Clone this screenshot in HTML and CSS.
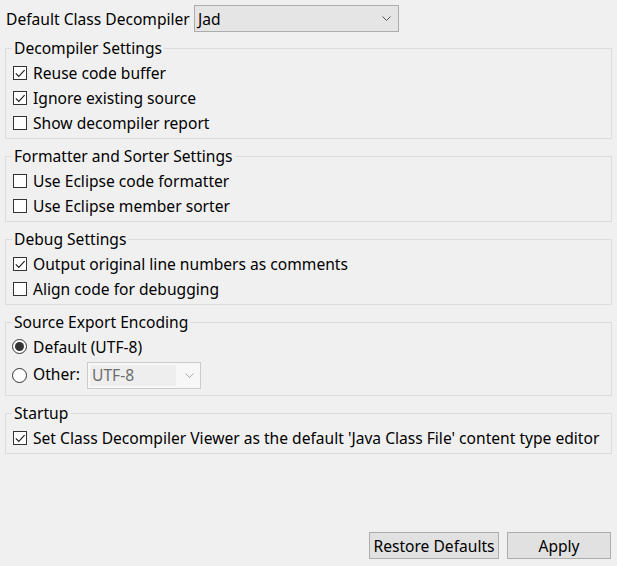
FILE: index.html
```html
<!DOCTYPE html>
<html>
<head>
<meta charset="utf-8">
<link rel="stylesheet" href="styles.css">
</head>
<body>
<div class="page">
  <div class="top-row">
    <span class="label">Default Class Decompiler</span>
    <div class="combo">
      <span class="combo-text">Jad</span>
      <svg class="chev" width="9" height="6" viewBox="0 0 9 6"><path d="M0.5 0.5 L4.5 4.5 L8.5 0.5" fill="none" stroke="#555" stroke-width="1"/></svg>
    </div>
  </div>

  <fieldset class="group">
    <legend>Decompiler Settings</legend>
    <label class="row"><span class="cb checked"><svg width="12" height="12" viewBox="0 0 12 12"><path d="M1.8 6.3 L4.8 9.3 L10.6 3.2" fill="none" stroke="#222" stroke-width="1.2"/></svg></span>Reuse code buffer</label>
    <label class="row"><span class="cb checked"><svg width="12" height="12" viewBox="0 0 12 12"><path d="M1.8 6.3 L4.8 9.3 L10.6 3.2" fill="none" stroke="#222" stroke-width="1.2"/></svg></span>Ignore existing source</label>
    <label class="row"><span class="cb"></span>Show decompiler report</label>
  </fieldset>

  <fieldset class="group">
    <legend>Formatter and Sorter Settings</legend>
    <label class="row"><span class="cb"></span>Use Eclipse code formatter</label>
    <label class="row"><span class="cb"></span>Use Eclipse member sorter</label>
  </fieldset>

  <fieldset class="group">
    <legend>Debug Settings</legend>
    <label class="row"><span class="cb checked"><svg width="12" height="12" viewBox="0 0 12 12"><path d="M1.8 6.3 L4.8 9.3 L10.6 3.2" fill="none" stroke="#222" stroke-width="1.2"/></svg></span>Output original line numbers as comments</label>
    <label class="row"><span class="cb"></span>Align code for debugging</label>
  </fieldset>

  <fieldset class="group">
    <legend>Source Export Encoding</legend>
    <label class="row"><span class="radio on"><span class="dot"></span></span>Default (UTF-8)</label>
    <div class="row row-other">
      <span class="radio"></span><span class="other-label">Other:</span>
      <div class="combo2">
        <span class="combo2-text">UTF-8</span>
        <svg class="chev2" width="9" height="6" viewBox="0 0 9 6"><path d="M0.5 0.5 L4.5 4.5 L8.5 0.5" fill="none" stroke="#aaa" stroke-width="1"/></svg>
      </div>
    </div>
  </fieldset>

  <fieldset class="group">
    <legend>Startup</legend>
    <label class="row"><span class="cb checked"><svg width="12" height="12" viewBox="0 0 12 12"><path d="M1.8 6.3 L4.8 9.3 L10.6 3.2" fill="none" stroke="#222" stroke-width="1.2"/></svg></span>Set Class Decompiler Viewer as the default 'Java Class File' content type editor</label>
  </fieldset>

  <div class="buttons">
    <button class="btn btn-restore">Restore Defaults</button>
    <button class="btn btn-apply">Apply</button>
  </div>
</div>
</body>
</html>
```

FILE: styles.css
```css
html, body {
  margin: 0;
  padding: 0;
  background: #f0f0f0;
}
body {
  font-family: "Noto Sans", "Open Sans", sans-serif;
  font-size: 15.6px;
  color: #000;
}
.page {
  box-sizing: border-box;
  min-height: 566px;
  padding: 5px 5px 7px 5px;
  display: flex;
  flex-direction: column;
}
.top-row {
  display: flex;
  align-items: center;
  height: 27px;
  margin-bottom: 6px;
}
.label {
  margin-left: 1px;
  width: 188px;
}
.combo {
  box-sizing: border-box;
  width: 205px;
  height: 27px;
  background: #e5e5e5;
  border: 1px solid #adadad;
  display: flex;
  align-items: center;
  justify-content: space-between;
  padding: 0 7px 0 3px;
}
.chev { display: block; }
.group {
  margin: 0 0 7px 0;
  border: 1px solid #dcdcdc;
  padding: 2px 6px 3px 6px;
  min-width: 0;
}
.group legend {
  padding: 0 2px;
  line-height: 20px;
  height: 20px;
}
.row {
  display: flex;
  align-items: center;
  height: 25px;
  white-space: nowrap;
}
.cb {
  box-sizing: border-box;
  width: 14px;
  height: 14px;
  border: 1px solid #333;
  background: #fff;
  margin-left: 1px;
  margin-right: 6px;
  display: flex;
  align-items: center;
  justify-content: center;
  flex: none;
}
.cb svg { display: block; }
.radio {
  box-sizing: border-box;
  width: 15px;
  height: 15px;
  border: 1px solid #333;
  border-radius: 50%;
  background: #fff;
  margin-left: 0;
  margin-right: 6px;
  display: flex;
  align-items: center;
  justify-content: center;
  flex: none;
}
.radio .dot {
  width: 9px;
  height: 9px;
  border-radius: 50%;
  background: #333;
}
.row-other {
  height: 33px;
  align-items: flex-start;
}
.row-other .radio { margin-top: 9px; }
.row-other .other-label { margin-top: 4px; width: 54px; }
.combo2 {
  box-sizing: border-box;
  margin-top: 3px;
  width: 114px;
  height: 27px;
  border: 1px solid #cccccc;
  background: #f7f7f7;
  display: flex;
  align-items: center;
  padding: 2px;
}
.combo2-text {
  background: #eeeeee;
  color: #6d6d6d;
  width: 86px;
  height: 21px;
  line-height: 21px;
  padding-left: 2px;
  box-sizing: border-box;
}
.chev2 { margin-left: 9px; display: block; }
.buttons {
  margin-top: auto;
  display: flex;
  justify-content: flex-end;
  gap: 8px;
  padding-right: 1px;
}
.btn {
  font-family: inherit;
  font-size: 15.6px;
  color: #000;
  height: 27px;
  background: #e1e1e1;
  border: 1px solid #adadad;
  padding: 0;
  margin: 0;
}
.btn-restore { width: 130px; }
.btn-apply { width: 104px; }
```
